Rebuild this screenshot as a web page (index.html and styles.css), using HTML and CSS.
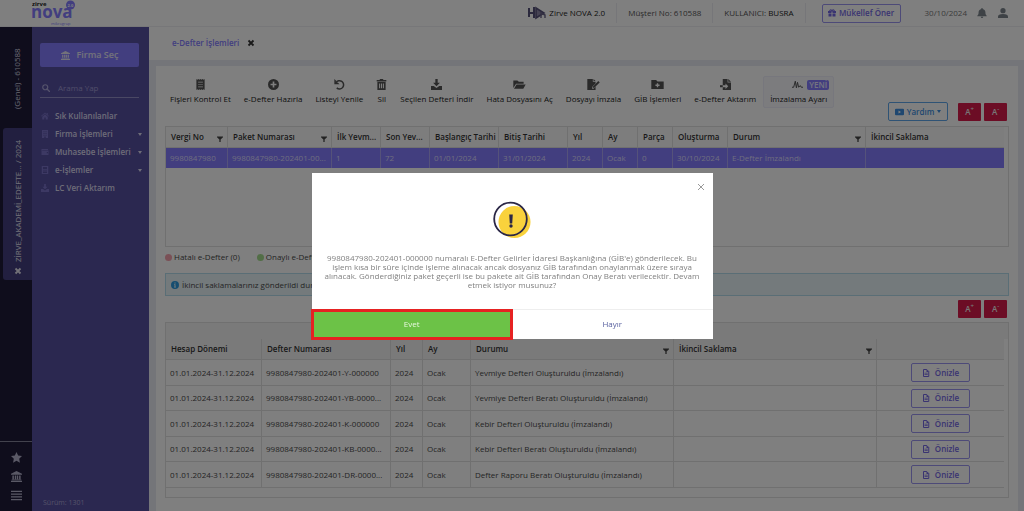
FILE: index.html
```html
<!DOCTYPE html>
<html lang="tr">
<head>
<meta charset="utf-8">
<title>Zirve Nova - e-Defter İşlemleri</title>
<link rel="stylesheet" href="styles.css">
</head>
<body>
<svg class="sprite" aria-hidden="true">
  <symbol id="bank" viewBox="0 0 16 16"><path d="M8 0 0 4v1.500h16V4zM2 6.500h2.200v5.500H2zM5.500 6.500h2v5.500h-2zM8.500 6.500h2v5.500h-2zM11.800 6.500H14v5.500h-2.200zM1 12.500h14v1H1zM0 14.200h16V16H0z"/></symbol>
  <symbol id="search" viewBox="0 0 16 16"><circle cx="6.500" cy="6.500" r="5" fill="none" stroke="currentColor" stroke-width="2.400"/><path d="m10 10 5 5" stroke="currentColor" stroke-width="2.800" stroke-linecap="round"/></symbol>
  <symbol id="home" viewBox="0 0 16 16"><path d="M8 1 0 8l1 1.200L8 3l7 6.200L16 8l-2.500-2.200V2h-2v2zM8 4.500 2.500 9.300V15H6.500v-4h3v4h4V9.300z"/></symbol>
  <symbol id="building" viewBox="0 0 16 16"><path fill-rule="evenodd" d="M2 0h12v16H9.500v-3h-3v3H2zM5 2.500v2h2v-2zm4 0v2h2v-2zM5 6v2h2V6zm4 0v2h2V6zM5 9.500v2h2v-2zm4 0v2h2v-2z"/></symbol>
  <symbol id="wallet" viewBox="0 0 16 16"><path fill-rule="evenodd" d="M1 2h13v2H2.500v.800H15V14H1zM11.500 8v2.500H14V8z"/></symbol>
  <symbol id="book" viewBox="0 0 16 16"><path fill-rule="evenodd" d="M1.500 0h13v16h-13zM4 2v4h8V2zM4 7.500V9h8V7.500zM4 11v3h8v-3z"/></symbol>
  <symbol id="download" viewBox="0 0 16 16"><path d="M6.300 0h3.400v5.500h3.300L8 10.500 3 5.500h3.300zM0 10h4l4 3 4-3h4v6H0z"/></symbol>
  <symbol id="star" viewBox="0 0 16 16"><path d="m8 0 2.400 5.100 5.600.7-4.100 3.900 1.100 5.800L8 12.700 3 15.500l1.100-5.800L0 5.800l5.600-.7z"/></symbol>
  <symbol id="bars" viewBox="0 0 16 16"><path d="M0 1h16v2H0zM0 5h16v2H0zM0 9h16v2H0zM0 13h16v2H0z"/></symbol>
  <symbol id="close" viewBox="0 0 16 16"><path d="m3 3 10 10M13 3 3 13" stroke="currentColor" stroke-width="3.600"/></symbol>
  <symbol id="receipt" viewBox="0 0 16 16"><path fill-rule="evenodd" d="M2 0l1.500 1L5 0l1.500 1L8 0l1.500 1L11 0l1.500 1L14 0v16l-1.500-1L11 16l-1.500-1L8 16l-1.500-1L5 16l-1.500-1L2 16zM4.500 4v1h7V4zm0 3.500v1h7v-1zm0 3.500v1h7v-1z"/></symbol>
  <symbol id="plus" viewBox="0 0 16 16"><path fill-rule="evenodd" d="M8 0a8 8 0 1 1 0 16A8 8 0 0 1 8 0zM6.800 3.700v3.100H3.700v2.400h3.100v3.100h2.400V9.200h3.100V6.800H9.200V3.700z"/></symbol>
  <symbol id="undo" viewBox="0 0 16 16"><path d="M2.800 5.500A6 6 0 1 1 4 13" fill="none" stroke="currentColor" stroke-width="2.200"/><path d="M.5 0v7.500H8L5.500 5H2.800V2.300z"/></symbol>
  <symbol id="trash" viewBox="0 0 16 16"><path fill-rule="evenodd" d="M1 1.500h4L6 0h4l1 1.500h4v2H1zM2 4.500h12V16H2zM4.500 6.500v7H6v-7zm2.800 0v7h1.400v-7zm2.700 0v7h1.500v-7z"/></symbol>
  <symbol id="folder" viewBox="0 0 18 16"><path d="M0 2h6l2 2h7v3H4L0 13zM4.700 8H18l-3.500 6H1z"/></symbol>
  <symbol id="sign" viewBox="0 0 18 16"><path d="M0 0h8v4h4v2.500L7.500 11l-.6 3H9l3-3v5H0zM9 0l3 3H9zM2 12l2-3 1 2.500 1-.5v1H2z"/><path d="m16 3 2 2-7.500 7.500-2.300.5.400-2.400z"/></symbol>
  <symbol id="folder-plus" viewBox="0 0 18 16"><path fill-rule="evenodd" d="M0 1.500h7l2 2h9v11H0zM8 6v2H6v2h2v2h2v-2h2V8h-2V6z"/></symbol>
  <symbol id="import" viewBox="0 0 16 16"><path fill-rule="evenodd" d="M4 0h7v5h5v11H4v-4h4v2.500L12 10.500 8 6.500V9H4zM12 0l4 4h-4z"/><path d="M0 9h4v3H0z"/></symbol>
  <symbol id="pulse" viewBox="0 0 20 16"><path d="M0 13h3L6 2l2 12L10 4l2 9 3-3 2 3h3" fill="none" stroke="currentColor" stroke-width="1.800"/></symbol>
  <symbol id="filter" viewBox="0 0 16 16"><path d="M0 1h16v2.500L9.700 9v7H6.300V9L0 3.500z"/></symbol>
  <symbol id="gift" viewBox="0 0 16 16"><path fill-rule="evenodd" d="M0 4h2.500A3 3 0 0 1 8 2a3 3 0 0 1 5.500 2H16v4H9V5H7v3H0zM4.500 3.500h2.300L5.500 2.200zM9.200 3.500h2.300l-1-1.300zM1 9h6v6H1zM9 9h6v6H9z"/></symbol>
  <symbol id="bell" viewBox="0 0 16 16"><path d="M7 0h2v1.500c3 .5 4.500 2.500 4.500 5.500 0 3 .8 4 2 5v1H.5v-1c1.200-1 2-2 2-5 0-3 1.500-5 4.500-5.500zM6 14h4a2 2 0 0 1-4 0z"/></symbol>
  <symbol id="user" viewBox="0 0 16 16"><circle cx="8" cy="4.200" r="4.200"/><path d="M0 16v-2.500C0 11 2.500 9.500 8 9.500s8 1.500 8 4V16z"/></symbol>
  <symbol id="video" viewBox="0 0 18 16"><path fill-rule="evenodd" d="M2 1.500h14a2 2 0 0 1 2 2v9a2 2 0 0 1-2 2H2a2 2 0 0 1-2-2v-9a2 2 0 0 1 2-2zM7 5v6l5-3z"/></symbol>
  <symbol id="file" viewBox="0 0 16 16"><path d="M3 1h6.500L13.500 5v10H3z" fill="none" stroke="currentColor" stroke-width="2"/><path d="M9 1v5h5zM5 7.500h6.500V9H5zM5 10.500h6.500V12H5z"/></symbol>
  <symbol id="info" viewBox="0 0 16 16"><path fill-rule="evenodd" d="M8 0a8 8 0 1 1 0 16A8 8 0 0 1 8 0zM6.800 3v2.200h2.400V3zM6 6.500V8h1v3.500H6V13h4v-1.500H9v-5z"/></symbol>
</svg>

<div class="app">
  <header class="topbar">
    <svg class="logo" viewBox="0 0 44 27" role="img" aria-label="Zirve Nova 2.0">
      <text class="logo-small" x="0" y="6">zirve</text>
      <text class="logo-name" x="-1" y="18">nova</text>
      <circle cx="38.500" cy="5" r="4.500"/>
      <text class="logo-version" x="35.500" y="7">2.0</text>
      <text class="logo-group" x="19" y="25">mikrogrup</text>
    </svg>
    <div class="top-cell">
      <svg class="brand" viewBox="0 0 18 14" aria-hidden="true"><path d="M1 2v9M1 7h5M6 1v11" stroke="#57527a" stroke-width="2"/><path d="m8 2 8 5-8 5z" fill="#8f89a8" stroke="#57527a" stroke-width="1.600"/><path d="M13 12V7l4 2v3" fill="none" stroke="#6a6488" stroke-width="1.400"/></svg>
      <span class="strong">Zirve NOVA 2.0</span>
    </div>
    <div class="top-cell">Müşteri No: 610588</div>
    <div class="top-cell"><span>KULLANICI: <span class="strong">BUSRA</span></span></div>
    <button class="btn-outline refer"><svg class="ico"><use href="#gift"/></svg>Mükellef Öner</button>
    <time class="date">30/10/2024</time>
    <div class="top-icons"><svg class="ico big"><use href="#bell"/></svg><svg class="ico big"><use href="#user"/></svg></div>
  </header>

  <div class="body">
    <aside class="rail">
      <div class="rail-general">(Genel) - 610588</div>
      <div class="rail-tab"><span>ZİRVE_AKADEMİ_EDEFTE... / 2024</span><svg class="ico"><use href="#close"/></svg></div>
      <div class="rail-tools">
        <svg class="ico"><use href="#star"/></svg>
        <svg class="ico"><use href="#bank"/></svg>
        <svg class="ico"><use href="#bars"/></svg>
      </div>
    </aside>

    <aside class="sidebar">
      <button class="firm"><svg class="ico"><use href="#bank"/></svg>Firma Seç</button>
      <label class="search"><svg class="ico"><use href="#search"/></svg><input type="text" placeholder="Arama Yap" aria-label="Arama Yap"></label>
      <nav class="menu">
        <a href="#"><svg class="ico"><use href="#home"/></svg>Sık Kullanılanlar</a>
        <a href="#"><svg class="ico"><use href="#building"/></svg>Firma İşlemleri<i class="caret"></i></a>
        <a href="#"><svg class="ico"><use href="#wallet"/></svg>Muhasebe İşlemleri<i class="caret"></i></a>
        <a href="#"><svg class="ico"><use href="#book"/></svg>e-İşlemler<i class="caret"></i></a>
        <a href="#"><svg class="ico"><use href="#download"/></svg>LC Veri Aktarım</a>
      </nav>
      <div class="version">Sürüm: 1301</div>
    </aside>

    <main class="main">
      <div class="tabs"><a href="#">e-Defter İşlemleri</a><svg class="ico"><use href="#close"/></svg></div>
      <section class="card">
        <div class="head">
          <div class="toolbar">
            <button><svg class="ico"><use href="#receipt"/></svg>Fişleri Kontrol Et</button>
            <button><svg class="ico"><use href="#plus"/></svg>e-Defter Hazırla</button>
            <button><svg class="ico"><use href="#undo"/></svg>Listeyi Yenile</button>
            <button><svg class="ico"><use href="#trash"/></svg>Sil</button>
            <button><svg class="ico"><use href="#download"/></svg>Seçilen Defteri İndir</button>
            <button><svg class="ico wide"><use href="#folder"/></svg>Hata Dosyasını Aç</button>
            <button><svg class="ico wide"><use href="#sign"/></svg>Dosyayı İmzala</button>
            <button><svg class="ico wide"><use href="#folder-plus"/></svg>GİB İşlemleri</button>
            <button><svg class="ico"><use href="#import"/></svg>e-Defter Aktarım</button>
            <button class="boxed"><span class="with-badge"><svg class="ico"><use href="#pulse"/></svg><b class="badge">YENİ</b></span>İmzalama Ayarı</button>
          </div>
          <div class="actions">
            <button class="btn-outline help"><svg class="ico wide"><use href="#video"/></svg>Yardım<i class="caret"></i></button>
            <div class="zoom"><button>A<sup>+</sup></button><button>A<sup>-</sup></button></div>
          </div>
        </div>

        <div class="grid first">
          <table>
            <colgroup><col class="w62"><col class="w104"><col class="w49"><col class="w49"><col class="w69"><col class="w69"><col class="w35"><col class="w35"><col class="w35"><col class="w55"><col><col></colgroup>
            <thead><tr>
              <th>Vergi No<svg class="funnel"><use href="#filter"/></svg></th>
              <th>Paket Numarası<svg class="funnel"><use href="#filter"/></svg></th>
              <th>İlk Yevm...</th><th>Son Yev...</th><th>Başlangıç Tarihi</th><th>Bitiş Tarihi</th><th>Yıl</th><th>Ay</th><th>Parça</th><th>Oluşturma</th>
              <th>Durum<svg class="funnel"><use href="#filter"/></svg></th>
              <th>İkincil Saklama</th>
            </tr></thead>
            <tbody><tr><td>9980847980</td><td>9980847980-202401-00...</td><td>1</td><td>72</td><td>01/01/2024</td><td>31/01/2024</td><td>2024</td><td>Ocak</td><td>0</td><td>30/10/2024</td><td>E-Defter İmzalandı</td><td></td></tr></tbody>
          </table>
        </div>

        <div class="legend"><span class="bad">Hatalı e-Defter (0)</span><span class="ok">Onaylı e-Defter (0)</span></div>
        <div class="alert"><svg class="ico"><use href="#info"/></svg>İkincil saklamalarınız gönderildi durumundadır.</div>
        <div class="zoom second-zoom"><button>A<sup>+</sup></button><button>A<sup>-</sup></button></div>

        <div class="grid second">
          <div class="group-bar"></div>
          <table>
            <colgroup><col class="w96"><col class="w129"><col class="w32"><col class="w48"><col><col><col class="w127"></colgroup>
            <thead><tr>
              <th>Hesap Dönemi</th><th>Defter Numarası</th><th>Yıl</th><th>Ay</th>
              <th>Durumu<svg class="funnel"><use href="#filter"/></svg></th>
              <th>İkincil Saklama<svg class="funnel"><use href="#filter"/></svg></th>
              <th></th>
            </tr></thead>
            <tbody>
              <tr><td>01.01.2024-31.12.2024</td><td>9980847980-202401-Y-000000</td><td>2024</td><td>Ocak</td><td>Yevmiye Defteri Oluşturuldu (İmzalandı)</td><td></td><td><button class="btn-outline preview"><svg class="ico"><use href="#file"/></svg>Önizle</button></td></tr>
              <tr><td>01.01.2024-31.12.2024</td><td>9980847980-202401-YB-0000...</td><td>2024</td><td>Ocak</td><td>Yevmiye Defteri Beratı Oluşturuldu (İmzalandı)</td><td></td><td><button class="btn-outline preview"><svg class="ico"><use href="#file"/></svg>Önizle</button></td></tr>
              <tr><td>01.01.2024-31.12.2024</td><td>9980847980-202401-K-000000</td><td>2024</td><td>Ocak</td><td>Kebir Defteri Oluşturuldu (İmzalandı)</td><td></td><td><button class="btn-outline preview"><svg class="ico"><use href="#file"/></svg>Önizle</button></td></tr>
              <tr><td>01.01.2024-31.12.2024</td><td>9980847980-202401-KB-0000...</td><td>2024</td><td>Ocak</td><td>Kebir Defteri Beratı Oluşturuldu (İmzalandı)</td><td></td><td><button class="btn-outline preview"><svg class="ico"><use href="#file"/></svg>Önizle</button></td></tr>
              <tr><td>01.01.2024-31.12.2024</td><td>9980847980-202401-DR-0000...</td><td>2024</td><td>Ocak</td><td>Defter Raporu Beratı Oluşturuldu (İmzalandı)</td><td></td><td><button class="btn-outline preview"><svg class="ico"><use href="#file"/></svg>Önizle</button></td></tr>
            </tbody>
          </table>
        </div>
      </section>
    </main>
  </div>
</div>

<div class="overlay">
  <div class="modal" role="dialog" aria-modal="true" aria-describedby="message">
    <button class="modal-close" aria-label="Kapat"><svg viewBox="0 0 8 8"><path d="m1 1 6 6M7 1 1 7" stroke="currentColor" stroke-width="1"/></svg></button>
    <div class="modal-body">
      <svg class="warn" viewBox="0 0 38 38" aria-hidden="true"><circle cx="21.500" cy="21" r="16" fill="#f9d23c"/><circle cx="17.500" cy="18" r="16.300" fill="none" stroke="#2b2746" stroke-width="1.800"/><path d="M16.200 13.500h3.600l-.6 9h-2.400z" fill="#2b2746"/><circle cx="18" cy="25" r="1.700" fill="#2b2746"/></svg>
      <p id="message">9980847980-202401-000000 numaralı E-Defter Gelirler İdaresi Başkanlığına (GİB'e) gönderilecek. Bu<br>işlem kısa bir süre içinde işleme alınacak ancak dosyanız GİB tarafından onaylanmak üzere sıraya<br>alınacak. Gönderdiğiniz paket geçerli ise bu pakete ait GİB tarafından Onay Beratı verilecektir. Devam<br>etmek istiyor musunuz?</p>
    </div>
    <div class="modal-actions"><button class="yes">Evet</button><button class="no">Hayır</button></div>
  </div>
</div>
</body>
</html>
```
FILE: styles.css
```css
* { box-sizing: border-box; }
body { margin: 0; font: 8px/12px "Open Sans", "Noto Sans", sans-serif; color: #4a4a4a; background: #fff; }
button, input { font: inherit; color: inherit; padding: 0; margin: 0; border: 0; background: none; }
a { color: inherit; text-decoration: none; }
.sprite { display: none; }
.ico { width: 8px; height: 8px; fill: currentColor; flex: none; }
.caret { width: 0; height: 0; border: 2px solid transparent; border-top: 3px solid currentColor; border-bottom: 0; }
.btn-outline { display: flex; align-items: center; justify-content: center; gap: 3px; height: 19px; border: 1px solid #9a94f0; border-radius: 2px; color: #7468e4; font-weight: 600; }

.app { display: flex; flex-direction: column; min-height: 100vh; }
.topbar { display: flex; align-items: center; height: 27px; padding: 0 16px 0 32px; border-bottom: 1px solid #eeeef2; color: #555; }
.logo { width: 44px; height: 27px; margin-right: auto; fill: #847cff; }
.logo text { font-family: "Open Sans", sans-serif; font-weight: 700; }
.logo .logo-small { font-size: 6px; fill: #222; }
.logo .logo-name { font-size: 17px; }
.logo .logo-version { font-size: 4px; fill: #fff; }
.logo .logo-group { font-size: 4px; font-weight: 400; }
.top-cell { display: flex; align-items: center; gap: 3px; height: 20px; padding: 0 11px; border-right: 1px solid #ededf2; white-space: pre; }
.brand { width: 18px; height: 14px; }
.strong { color: #222; }
.refer { width: 79px; margin: 0 24px 0 16px; }
.date { color: #777; }
.top-icons { display: flex; gap: 11px; margin-left: 10px; color: #7c858d; }
.ico.big { width: 10px; height: 10px; }

.body { display: flex; flex: 1; }
.rail { display: flex; flex-direction: column; align-items: flex-end; width: 32px; padding-top: 20px; background: #1e1a38; color: #d2d0e0; }
.rail-general, .rail-tab span { writing-mode: vertical-rl; transform: rotate(180deg); white-space: nowrap; }
.rail-general { width: 12px; height: 62px; margin-right: 9px; }
.rail-tab { display: flex; flex-direction: column; align-items: center; justify-content: flex-end; gap: 5px; width: 29px; height: 152px; margin-top: 19px; padding-bottom: 5px; border-radius: 3px 0 0 3px; background: #453f80; color: #e4e3f0; }
.rail-tools { display: flex; flex-direction: column; align-items: center; gap: 8px; width: 100%; margin-top: auto; padding: 10px 0; border-top: 1px solid #85849a; color: #b4b2cc; }
.rail-tools .ico { width: 11px; height: 11px; }
.sidebar { display: flex; flex-direction: column; width: 117px; padding: 16px 10px 2px 8px; background: #5650a0; color: #dcdaf0; }
.firm { display: flex; align-items: center; justify-content: center; gap: 7px; height: 24px; border-radius: 2px; background: #847cff; color: #e6e5f5; font-size: 9px; font-weight: 600; }
.firm .ico { width: 9px; height: 9px; }
.search { display: flex; align-items: center; gap: 8px; height: 20px; margin-top: 11px; padding-left: 2px; border-bottom: 1px solid #9490c8; color: #aaa6d8; }
.search input { width: 100%; min-width: 0; outline: 0; }
.search input::placeholder { color: #a19cd4; opacity: 1; }
.menu { margin-top: 9px; }
.menu a { display: flex; align-items: center; gap: 6px; height: 18px; padding-left: 1px; font-weight: 600; white-space: nowrap; }
.menu .ico { color: #7a73c8; }
.menu .caret { margin-left: auto; margin-right: -3px; }
.version { margin: auto 0 0 3px; color: #aaa5d4; font-size: 7px; }

.main { display: flex; flex-direction: column; flex: 1; min-width: 0; background: #e9eaf2; }
.tabs { display: flex; align-items: center; gap: 8px; height: 33px; padding: 0 0 2px 23px; background: #fff; color: #847cff; font-weight: 600; }
.tabs .ico { color: #333; }
.card { flex: 1; margin: 6px 6px 0 7px; padding: 10px 9px; background: #fff; }
.head { display: flex; justify-content: space-between; height: 45px; }
.toolbar { display: flex; gap: 2px; align-items: flex-start; }
.toolbar button { display: flex; flex-direction: column; align-items: center; gap: 3px; height: 32px; padding: 3px 6px 0 5px; white-space: nowrap; color: #222; }
.toolbar .ico { width: 11px; height: 11px; color: #555; }
.toolbar .wide { width: 13px; }
.toolbar .boxed { margin-left: -1px; border: 1px solid #eeeefa; border-radius: 2px; background: #f8f8fd; padding: 2px 4px 0; }
.with-badge { display: flex; align-items: center; gap: 4px; height: 11px; margin-left: 24px; }
.badge { padding: 0 2px; border-radius: 2px; background: #847cff; color: #e8e8ff; line-height: 10px; font-weight: 600; }
.actions { display: flex; align-items: flex-end; gap: 10px; margin-right: 2px; }
.help { width: 60px; border-color: #5ea6ea; color: #3f8fe0; }
.help .ico { width: 9px; }
.zoom { display: flex; gap: 3px; }
.zoom button { width: 23px; height: 18px; border-radius: 1px; background: #d81b4a; color: #eee; font-weight: 600; }
.zoom sup { font-size: 6px; line-height: 0; }
.second-zoom { justify-content: flex-end; margin: 4px 2px 4px 0; }

.grid { border: 1px solid #e0e0e0; padding-right: 4px; }
.grid.first { height: 121px; margin-top: 5px; }
.grid.second { padding-bottom: 9px; }
.group-bar { height: 16px; margin-right: -4px; background: #f4f4f4; }
table { width: 100%; table-layout: fixed; border-collapse: separate; border-spacing: 0; }
.w62 { width: 62px; } .w104 { width: 104px; } .w49 { width: 49px; } .w69 { width: 69px; } .w35 { width: 35px; } .w55 { width: 55px; }
.w96 { width: 96px; } .w129 { width: 129px; } .w32 { width: 32px; } .w48 { width: 48px; } .w127 { width: 127px; }
th, td { padding: 0 0 0 5px; text-align: left; white-space: nowrap; border-right: 1px solid #e0e0e0; border-bottom: 1px solid #e0e0e0; overflow: hidden; }
td { padding-left: 4px; }
th:last-child, td:last-child { border-right: 0; }
th { height: 21px; font-weight: 600; color: #333; background: #fbfbfb; }
.second th { background: #f4f4f4; }
.funnel { float: right; width: 6px; height: 6px; margin: 5px 4px 0 0; fill: #444; }
.first td { height: 20px; background: #847cff; color: #dcdaff; border-bottom: 0; border-right-color: #aaa4f5; }
.second td { height: 26px; }
.second tr:nth-child(even) td { height: 25px; }
.second td:last-child { padding: 0; }
.preview { width: 59px; margin: 0 auto; gap: 5px; }

.legend { display: flex; gap: 17px; height: 12px; margin-top: 4px; }
.legend span { display: flex; align-items: center; gap: 2px; }
.legend span::before { content: ""; width: 7px; height: 7px; border-radius: 50%; background: #f4a0ac; }
.legend .ok::before { background: #a4dc8c; }
.alert { display: flex; align-items: center; gap: 3px; height: 23px; margin-top: 10px; padding-left: 5px; border: 1px solid #b4dcec; background: #e8f4f8; }
.alert .ico { color: #2c9be0; }

.overlay { position: fixed; inset: 0; display: flex; align-items: center; justify-content: center; background: rgba(0, 0, 0, .5); }
.modal { position: relative; width: 401px; max-width: 96%; background: #fff; color: #808080; text-align: center; }
.modal-close { position: absolute; top: 10px; right: 8px; width: 8px; height: 8px; color: #999; }
.modal-close svg { display: block; width: 8px; height: 8px; }
.modal-body { padding: 28px 8px 20px; }
.warn { display: block; width: 38px; height: 38px; margin: 0 auto; }
.modal p { margin: 14px 0 0; line-height: 9px; }
.modal-actions { display: grid; grid-template-columns: 1fr 1fr; height: 30px; border-top: 1px solid #eee; }
.yes { background: #6cc247; color: #e8f8e0; outline: 3px solid #e62222; outline-offset: -2px; }
.no { color: #5a62a0; }
```
